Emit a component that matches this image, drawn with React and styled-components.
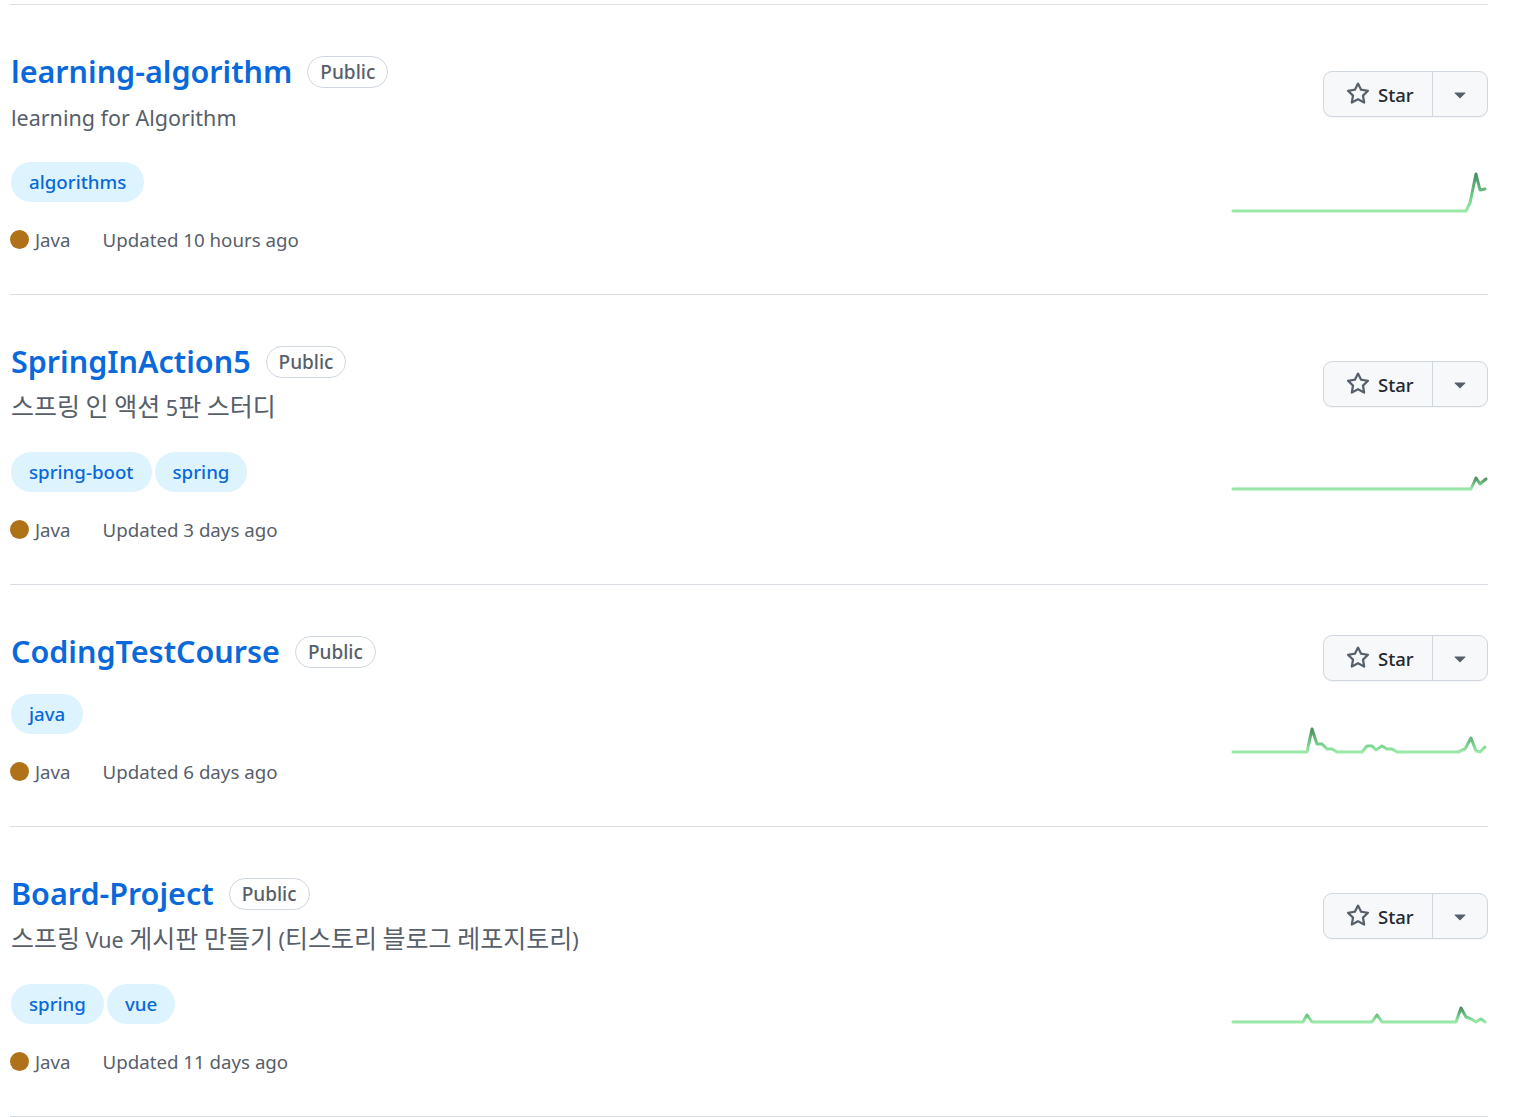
import React from "react";
import styled, { createGlobalStyle } from "styled-components";

const repos = [
  {
    name: "learning-algorithm",
    description: "learning for Algorithm",
    topics: ["algorithms"],
    updated: "Updated 10 hours ago",
    spark: "0,28 233,28 237,20 243,-9 247,7 252,6",
  },
  {
    name: "SpringInAction5",
    description: "스프링 인 액션 5판 스터디",
    topics: ["spring-boot", "spring"],
    updated: "Updated 3 days ago",
    spark: "0,16 238,16 243,5 247,11 253,6",
  },
  {
    name: "CodingTestCourse",
    topics: ["java"],
    updated: "Updated 6 days ago",
    spark:
      "0,21 74,21 79,-2 84,13 89,13 94,18 99,18 104,21 129,21 134,15 139,15 143,19 149,15 154,18 159,18 164,21 225,21 232,18 238,7 243,20 247,21 252,16",
  },
  {
    name: "Board-Project",
    description: "스프링 Vue 게시판 만들기 (티스토리 블로그 레포지토리)",
    topics: ["spring", "vue"],
    updated: "Updated 11 days ago",
    spark:
      "0,17 70,17 74,10 79,17 139,17 144,10 149,17 223,17 228,3 233,12 238,14 243,17 248,14 252,17",
  },
];

// Hangul runs are set a little larger, as the Korean fallback in the shot is
function splitHangul(text) {
  return text.split(/([\uAC00-\uD7A3]+)/).map((part, i) =>
    /[\uAC00-\uD7A3]/.test(part) ? <Hangul key={i}>{part}</Hangul> : part
  );
}

export default function App() {
  return (
    <>
      <GlobalStyle />
      <Page>
        <RepoList>
          {repos.map((repo) => (
            <RepoItem key={repo.name}>
              <Info>
                <TitleRow>
                  <RepoLink href="#">{repo.name}</RepoLink>
                  <Visibility>Public</Visibility>
                </TitleRow>
                {repo.description && (
                  <Description>{splitHangul(repo.description)}</Description>
                )}
                <Topics>
                  {repo.topics.map((t) => (
                    <Topic key={t} href="#">{t}</Topic>
                  ))}
                </Topics>
                <Meta>
                  <Language>
                    <LangDot />
                    Java
                  </Language>
                  <span>{repo.updated}</span>
                </Meta>
              </Info>
              <Side>
                <StarGroup>
                  <StarButton>
                    <StarIcon />
                    Star
                  </StarButton>
                  <CaretButton>
                    <CaretIcon />
                  </CaretButton>
                </StarGroup>
                <Sparkline points={repo.spark} />
              </Side>
            </RepoItem>
          ))}
        </RepoList>
      </Page>
    </>
  );
}

function StarIcon() {
  return (
    <svg width="24" height="24" viewBox="0 0 16 16" fill="#57606a">
      <path d="M8 .25a.75.75 0 0 1 .673.418l1.882 3.815 4.21.612a.75.75 0 0 1 .416 1.279l-3.046 2.97.719 4.192a.751.751 0 0 1-1.088.791L8 12.347l-3.766 1.98a.75.75 0 0 1-1.088-.79l.72-4.194L.818 6.374a.75.75 0 0 1 .416-1.28l4.21-.611L7.327.668A.75.75 0 0 1 8 .25Zm0 2.445L6.615 5.5a.75.75 0 0 1-.564.41l-3.097.45 2.24 2.184a.75.75 0 0 1 .216.664l-.528 3.084 2.769-1.456a.75.75 0 0 1 .698 0l2.77 1.456-.53-3.084a.75.75 0 0 1 .216-.664l2.24-2.183-3.096-.45a.75.75 0 0 1-.564-.41L8 2.694Z" />
    </svg>
  );
}

function CaretIcon() {
  return (
    <svg width="24" height="24" viewBox="0 0 16 16" fill="#57606a">
      <path d="m4.427 7.427 3.396 3.396a.25.25 0 0 0 .354 0l3.396-3.396A.25.25 0 0 0 11.396 7H4.604a.25.25 0 0 0-.177.427Z" />
    </svg>
  );
}

// activity graph, stroke coloured from light (bottom) to dark (top)
function Sparkline({ points }) {
  return (
    <SparkSvg width="255" height="45" viewBox="0 0 255 45">
      <defs>
        <linearGradient id="spark-gradient" x1="0" x2="0" y1="1" y2="0">
          <stop offset="0%" stopColor="#9be9a8" />
          <stop offset="35%" stopColor="#74cf8b" />
          <stop offset="100%" stopColor="#4a8e61" />
        </linearGradient>
      </defs>
      <polyline
        points={points}
        fill="none"
        stroke="url(#spark-gradient)"
        strokeWidth="3"
        strokeLinejoin="round"
        strokeLinecap="round"
      />
    </SparkSvg>
  );
}

const GlobalStyle = createGlobalStyle`
  body {
    margin: 0;
    background: #ffffff;
    font-family: "Noto Sans", "Noto Sans CJK KR", "Liberation Sans", sans-serif;
    color: #24292f;
  }
`;

const Page = styled.div`
  padding: 4px 0 0 10px;
`;

const RepoList = styled.div`
  width: 1478px;
  border-top: 1px solid #d8dee4;
`;

const RepoItem = styled.div`
  display: flex;
  justify-content: space-between;
  border-bottom: 1px solid #d8dee4;
`;

const Info = styled.div`
  display: flex;
  flex-direction: column;
  align-items: flex-start;
  padding: 44px 0 41px 1px;
`;

const TitleRow = styled.div`
  display: flex;
  align-items: center;
  gap: 15px;
  height: 45px;
`;

const RepoLink = styled.a`
  font-size: 30.5px;
  font-weight: 600;
  line-height: 45px;
  color: #0969da;
  text-decoration: none;
`;

const Visibility = styled.span`
  display: inline-flex;
  align-items: center;
  height: 32px;
  box-sizing: border-box;
  padding: 0 12px;
  border: 1px solid #d0d7de;
  border-radius: 16px;
  font-size: 19px;
  font-weight: 500;
  color: #57606a;
`;

const Description = styled.p`
  height: 32px;
  margin: 8px 0;
  font-size: 21.5px;
  line-height: 32px;
  color: #57606a;
  white-space: nowrap;
`;

const Hangul = styled.span`
  font-family: "Noto Sans CJK KR", sans-serif;
  font-size: 25px;
  line-height: 1;
`;

const Topics = styled.div`
  display: flex;
  gap: 3px;
  margin-top: 20px;
`;

const Topic = styled.a`
  height: 40px;
  padding: 0 18px;
  border-radius: 20px;
  background: #ddf4ff;
  color: #0969da;
  font-size: 18.7px;
  font-weight: 500;
  line-height: 40px;
  text-decoration: none;
`;

const Meta = styled.div`
  display: flex;
  align-items: center;
  height: 27px;
  margin-top: 24px;
  margin-left: -1px;
  font-size: 18.7px;
  line-height: 27px;
  color: #57606a;
`;

const Language = styled.span`
  display: inline-flex;
  align-items: center;
  gap: 6px;
  margin-right: 32px;
`;

const LangDot = styled.span`
  width: 19px;
  height: 19px;
  border-radius: 50%;
  background: #b07219;
`;

const Side = styled.div`
  display: flex;
  flex-direction: column;
  justify-content: space-evenly;
  align-items: flex-end;
`;

const StarGroup = styled.div`
  display: flex;
  height: 46px;
  box-sizing: border-box;
  border: 1px solid #d0d7de;
  border-radius: 9px;
  background: #f6f8fa;
  box-shadow: 0 1px 0 rgba(31, 35, 40, 0.04);
`;

const StarButton = styled.button`
  display: flex;
  align-items: center;
  gap: 8px;
  width: 109px;
  padding: 0 0 0 22px;
  border: none;
  border-right: 1px solid #d0d7de;
  background: transparent;
  font-family: inherit;
  font-size: 18.5px;
  font-weight: 500;
  color: #24292f;
  cursor: pointer;
`;

const CaretButton = styled.button`
  display: flex;
  align-items: center;
  justify-content: center;
  width: 54px;
  padding: 0;
  border: none;
  background: transparent;
  cursor: pointer;
`;

const SparkSvg = styled.svg`
  display: block;
  overflow: visible;
`;
